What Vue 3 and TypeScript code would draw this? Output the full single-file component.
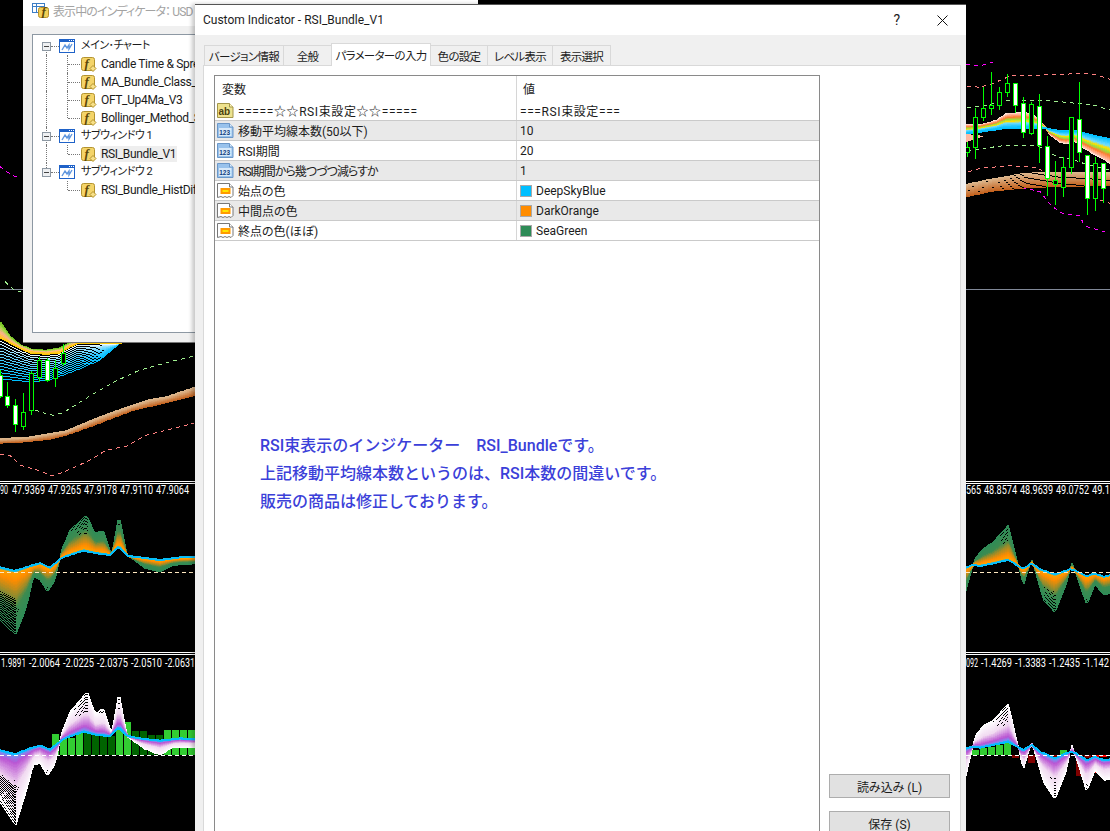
<script setup lang="ts">
type Pt = [number, number]
type Stop = [number, string]

interface Stroke {
  id: string
  points: string
  color: string
  width: number
}

// traced from the reference at 3x, so convert back to page pixels
const trace = (pts: number[][], ox: number, oy: number): Pt[] =>
  pts.map(([x, y]) => [ox + x / 3, oy + y / 3] as Pt)

const toPoints = (pts: Pt[]) => pts.map(([x, y]) => `${x},${y}`).join(' ')

const yAt = (pts: Pt[], x: number) => {
  for (let i = 1; i < pts.length; i++) {
    if (x <= pts[i][0]) {
      const [x0, y0] = pts[i - 1]
      const [x1, y1] = pts[i]
      return y0 + ((y1 - y0) * (x - x0)) / (x1 - x0 || 1)
    }
  }
  return pts[pts.length - 1][1]
}

const rgb = (hex: string) => [1, 3, 5].map((i) => parseInt(hex.slice(i, i + 2), 16))

const colorAt = (stops: Stop[], t: number) => {
  let i = 1
  while (i < stops.length - 1 && t > stops[i][0]) i++
  const [t0, c0] = stops[i - 1]
  const [t1, c1] = stops[i]
  const k = Math.min(1, Math.max(0, (t - t0) / (t1 - t0)))
  const a = rgb(c0)
  const b = rgb(c1)
  return `rgb(${a.map((v, n) => Math.round(v + (b[n] - v) * k)).join(',')})`
}

// a bundle of lines spread between two traced curves
const fan = (id: string, a: Pt[], b: Pt[], count: number, pow: number, stops: Stop[], thick = 0.45): Stroke[] => {
  const x0 = a[0][0]
  const x1 = a[a.length - 1][0]
  const out: Stroke[] = []
  for (let i = count; i >= 0; i--) {
    const t = Math.pow(i / count, pow)
    const pts: Pt[] = []
    for (let x = x0; x <= x1 + 2; x += 2) {
      pts.push([x, Math.round(yAt(a, x) + (yAt(b, x) - yAt(a, x)) * t)])
    }
    out.push({ id: `${id}${i}`, points: toPoints(pts), color: colorAt(stops, t), width: t < thick && i > 0 ? 2 : 1 })
  }
  return out
}

const rsiStops: Stop[] = [[0, '#00bfff'], [0.025, '#ffa000'], [0.15, '#ff8c00'], [0.6, '#3c8b50'], [1, '#2e8b57']]
const histStops: Stop[] = [[0, '#00bfff'], [0.025, '#7b8cf0'], [0.12, '#ba55d3'], [0.45, '#f0d8f0'], [1, '#ffffff']]
const copper: Stop[] = [[0, '#dcb68c'], [1, '#c4621e']]

const leftRsiA = trace([[0, 262], [45, 272], [90, 258], [120, 250], [150, 262], [180, 238], [195, 230], [250, 212], [290, 220], [330, 225], [357, 200], [382, 228], [420, 232], [480, 240], [540, 232], [583, 232]], 0, 480)
const leftRsiB = trace([[0, 420], [47, 465], [80, 380], [100, 290], [120, 300], [142, 335], [165, 300], [185, 210], [210, 150], [260, 105], [285, 160], [310, 150], [335, 225], [357, 105], [382, 225], [430, 262], [480, 275], [520, 255], [583, 250]], 0, 480)
const leftHistA = trace([[0, 300], [45, 312], [90, 295], [120, 287], [150, 298], [180, 275], [195, 265], [250, 245], [290, 255], [330, 258], [357, 233], [382, 258], [420, 265], [480, 272], [540, 265], [583, 268]], 0, 650)
const leftHistB = trace([[0, 455], [47, 528], [80, 420], [100, 345], [120, 340], [142, 378], [165, 345], [185, 250], [210, 185], [262, 124], [285, 190], [310, 175], [335, 250], [357, 124], [382, 260], [430, 295], [480, 315], [520, 292], [583, 290]], 0, 650)
const rightRsiA = trace([[18, 262], [40, 255], [60, 258], [100, 250], [145, 240], [175, 258], [190, 265], [215, 250], [240, 268], [285, 283], [330, 268], [348, 272], [380, 288], [405, 280], [430, 290], [450, 285]], 960, 480)
const rightRsiB = trace([[18, 332], [45, 235], [70, 205], [100, 185], [145, 135], [175, 255], [190, 318], [215, 238], [250, 360], [285, 398], [320, 310], [335, 245], [380, 375], [405, 312], [430, 345], [450, 340]], 960, 480)
const rightHistA = trace([[18, 805], [40, 800], [60, 803], [100, 795], [145, 785], [175, 803], [190, 810], [215, 795], [240, 815], [285, 835], [330, 815], [348, 820], [380, 840], [405, 830], [430, 840], [450, 838]], 960, 480)
const rightHistB = trace([[18, 888], [45, 770], [70, 735], [100, 720], [145, 670], [175, 800], [190, 872], [215, 785], [250, 905], [285, 960], [320, 870], [335, 792], [380, 935], [405, 870], [430, 900], [450, 897]], 960, 480)

const ribbonA = trace([[18, 222], [100, 210], [130, 205], [180, 204], [230, 204], [260, 205], [300, 212], [350, 212], [400, 225], [450, 235]], 960, 60)
const ribbonB = trace([[18, 195], [60, 195], [90, 188], [110, 182], [140, 162], [170, 160], [200, 160], [225, 170], [240, 185], [258, 205], [270, 222], [300, 245], [320, 250], [340, 240], [370, 262], [400, 280], [450, 308]], 960, 60)
const ribbonStops: Stop[] = [[0, '#00bfff'], [0.3, '#6fdcff'], [0.42, '#ffe000'], [0.55, '#9be03c'], [0.7, '#ff7a30'], [0.9, '#ffb8a0'], [1, '#ffe6dc']]

const leftLine = trace([[0, 175], [30, 190], [60, 205], [90, 218], [140, 222], [180, 218], [210, 200], [235, 190], [360, 190]], 0, 280)
const leftBlue = trace([[0, 295], [100, 305], [160, 295], [230, 270], [300, 240], [360, 190]], 0, 280)
const leftGreen = trace([[0, 125], [30, 170], [60, 195], [100, 210], [140, 212], [180, 205], [210, 190], [235, 185], [360, 190]], 0, 280)

const leftCopperA = trace([[0, 476], [80, 472], [150, 460], [200, 452], [300, 410], [350, 392], [400, 375], [450, 358], [500, 350], [583, 322]], 0, 280)
const leftCopperB = trace([[0, 488], [80, 484], [150, 476], [200, 464], [300, 428], [350, 408], [400, 390], [450, 378], [500, 366], [583, 346]], 0, 280)
const rightCopperA = trace([[18, 372], [100, 355], [200, 338], [300, 335], [450, 335]], 960, 60)
const rightCopperB = trace([[18, 410], [100, 392], [200, 382], [300, 378], [450, 375]], 960, 60)

const bundles: Stroke[] = [
  ...fan('a', leftLine, leftGreen, 10, 1, [[0, '#ffd000'], [0.35, '#ffb090'], [0.7, '#a8d848'], [1, '#6cc020']], 2),
  ...fan('b', leftLine, leftBlue, 13, 1, [[0, '#ffc800'], [0.04, '#ffffff'], [0.2, '#a0e4ff'], [0.6, '#30c8ff'], [1, '#00bfff']], 0.06),
  ...fan('c', leftCopperA, leftCopperB, 10, 1, copper, 2),
  ...fan('d', rightCopperA, rightCopperB, 12, 1, copper, 0),
  ...fan('e', ribbonA, ribbonB, 26, 1, ribbonStops, 2),
  ...fan('f', leftRsiA, leftRsiB, 40, 1.8, rsiStops),
  ...fan('g', rightRsiA, rightRsiB, 40, 1.8, rsiStops),
]

const histBundles: Stroke[] = [
  ...fan('h', leftHistA, leftHistB, 40, 1.8, histStops),
  ...fan('i', rightHistA, rightHistB, 40, 1.8, histStops),
]

const dashLines = [
  { color: '#ff00ff', pts: trace([[0, 500], [20, 515], [45, 530], [60, 532]], 0, 0) },
  { color: '#a0f090', pts: trace([[15, 5], [40, 28], [70, 38]], 0, 280) },
  { color: '#a0f090', pts: trace([[105, 390], [135, 400], [160, 406], [190, 398], [250, 360], [300, 330], [350, 302], [420, 270], [500, 248], [583, 228]], 0, 280) },
  { color: '#ff8080', pts: trace([[0, 524], [30, 526], [60, 555], [110, 570], [160, 588], [210, 568], [270, 540], [320, 510], [380, 498], [440, 465], [500, 450], [583, 430]], 0, 280) },
  { color: '#ff00ff', pts: trace([[18, 13], [60, 18], [110, 3]], 960, 60) },
  { color: '#ff8080', pts: trace([[20, 78], [60, 82], [100, 70], [150, 48], [250, 45], [380, 40], [410, 45], [450, 58]], 960, 60) },
  { color: '#a0f090', pts: trace([[20, 142], [60, 140], [140, 120], [250, 120], [300, 125], [400, 135], [450, 150]], 960, 60) },
  { color: '#a0f090', pts: trace([[20, 272], [130, 257], [230, 255], [290, 290], [330, 295], [370, 310], [450, 330]], 960, 60) },
  { color: '#ff8080', pts: trace([[25, 335], [60, 325], [150, 317], [230, 322], [250, 335]], 960, 60) },
  { color: '#ff8080', pts: trace([[420, 420], [450, 430]], 960, 60) },
  { color: '#ff00ff', pts: trace([[20, 405], [100, 385], [200, 385], [240, 395], [270, 432], [300, 458], [360, 468], [370, 490], [385, 502], [445, 518]], 960, 60) },
].map((line, i) => ({ id: i, color: line.color, points: toPoints(line.pts) }))

// x, body top, body bottom, wick top, wick bottom, filled
const candles: [number, number, number, number, number, boolean][] = [
  [0, 375, 396, 370, 398, true],
  [7, 396, 405, 382, 408, true],
  [15, 405, 424, 399, 432, true],
  [23, 412, 426, 393, 430, false],
  [31, 373, 410, 371, 415, false],
  [39, 360, 377, 357, 382, false],
  [47, 360, 380, 358, 382, true],
  [55, 368, 378, 360, 387, false],
  [63, 353, 363, 344, 366, false],
  [967, 147, 152, 142, 157, false],
  [975, 117, 147, 108, 159, false],
  [983, 108, 117, 87, 121, false],
  [991, 105, 108, 72, 115, false],
  [999, 92, 105, 87, 110, false],
  [1007, 83, 92, 74, 97, false],
  [1015, 83, 105, 83, 113, true],
  [1023, 103, 132, 97, 138, true],
  [1031, 104, 133, 102, 135, false],
  [1039, 106, 145, 94, 163, true],
  [1047, 146, 178, 136, 196, true],
  [1055, 180, 184, 161, 205, false],
  [1063, 167, 187, 157, 197, false],
  [1071, 117, 167, 117, 174, false],
  [1079, 119, 152, 82, 162, true],
  [1087, 155, 198, 155, 215, true],
  [1095, 163, 198, 157, 211, false],
  [1103, 163, 188, 163, 203, true],
]

const lime = '#32cd32'
const dark = '#006400'
const maroon = '#800000'
const red = '#ff0000'

const histBars = [
  ...[734, 738, 738, 733, 731, 734, 733, 736, 727, 722, 731, 731, 735, 735, 730, 730, 730, 730].map((top, i) => ({
    x: 52 + 8 * i,
    y: top,
    h: 755 - top,
    color: [4, 5, 6, 7, 10, 11, 12, 13].includes(i) ? dark : lime,
  })),
  { x: 966, y: 748, h: 7, color: lime },
  { x: 972, y: 750, h: 5, color: lime },
  { x: 980, y: 748, h: 7, color: lime },
  { x: 988, y: 747, h: 8, color: lime },
  { x: 996, y: 745, h: 10, color: lime },
  { x: 1004, y: 743, h: 12, color: lime },
  { x: 1012, y: 755, h: 3, color: maroon },
  { x: 1028, y: 755, h: 8, color: maroon },
  { x: 1052, y: 755, h: 2, color: maroon },
  { x: 1060, y: 750, h: 5, color: lime },
  { x: 1076, y: 755, h: 21, color: maroon },
  { x: 1084, y: 755, h: 3, color: maroon },
  { x: 1092, y: 755, h: 18, color: red },
  { x: 1100, y: 755, h: 2, color: red },
]

const valueLabels = [
  { y: 494, w: 8, x: 0, t: '90' },
  { y: 494, w: 33, x: 12, t: '47.9369' },
  { y: 494, w: 33, x: 48, t: '47.9265' },
  { y: 494, w: 33, x: 84, t: '47.9178' },
  { y: 494, w: 33, x: 120, t: '47.9110' },
  { y: 494, w: 33, x: 156, t: '47.9064' },
  { y: 494, w: 15, x: 966, t: '565' },
  { y: 494, w: 33, x: 984, t: '48.8574' },
  { y: 494, w: 33, x: 1020, t: '48.9639' },
  { y: 494, w: 33, x: 1056, t: '49.0752' },
  { y: 494, w: 18, x: 1092, t: '49.1' },
  { y: 667, w: 25, x: 1, t: '1.9891' },
  { y: 667, w: 31, x: 29, t: '-2.0064' },
  { y: 667, w: 31, x: 63, t: '-2.0225' },
  { y: 667, w: 31, x: 97, t: '-2.0375' },
  { y: 667, w: 31, x: 131, t: '-2.0510' },
  { y: 667, w: 30, x: 165, t: '-2.0631' },
  { y: 667, w: 12, x: 966, t: '092' },
  { y: 667, w: 31, x: 981, t: '-1.4269' },
  { y: 667, w: 31, x: 1015, t: '-1.3383' },
  { y: 667, w: 31, x: 1049, t: '-1.2435' },
  { y: 667, w: 26, x: 1083, t: '-1.142' },
]

const treeRows = [
  { label: 'メイン･チャート', top: true, trunk: 'lower' },
  { label: 'Candle Time & Spre', trunk: 'full', branch: 'full' },
  { label: 'MA_Bundle_Class_V', trunk: 'full', branch: 'full' },
  { label: 'OFT_Up4Ma_V3', trunk: 'full', branch: 'full' },
  { label: 'Bollinger_Method_S', trunk: 'full', branch: 'upper' },
  { label: 'サブウィンドウ 1', top: true, trunk: 'full' },
  { label: 'RSI_Bundle_V1', trunk: 'full', branch: 'upper', selected: true },
  { label: 'サブウィンドウ 2', top: true, trunk: 'upper' },
  { label: 'RSI_Bundle_HistDif', branch: 'upper' },
]

const tabs = ['バージョン情報', '全般', 'パラメーターの入力', '色の設定', 'レベル表示', '表示選択']

const params = [
  { kind: 'ab', name: '=====☆☆RSI束設定☆☆=====', value: '===RSI束設定===', spacing: 'wide' },
  { kind: 'num', name: '移動平均線本数(50以下)', value: '10' },
  { kind: 'num', name: 'RSI期間', value: '20' },
  { kind: 'num', name: 'RSI期間から幾つづつ減らすか', value: '1', spacing: 'tight' },
  { kind: 'color', name: '始点の色', value: 'DeepSkyBlue', swatch: '#00bfff' },
  { kind: 'color', name: '中間点の色', value: 'DarkOrange', swatch: '#ff8c00' },
  { kind: 'color', name: '終点の色(ほぼ)', value: 'SeaGreen', swatch: '#2e8b57' },
]
</script>

<template>
  <main class="desk">
    <svg class="chart" width="1110" height="831" viewBox="0 0 1110 831">
      <rect x="0" y="289" width="1110" height="1" fill="#808898" />
      <polyline
        v-for="line in dashLines"
        :key="line.id"
        :points="line.points"
        :stroke="line.color"
        fill="none"
        stroke-dasharray="4 4"
      />
      <polyline
        v-for="line in bundles"
        :key="line.id"
        :points="line.points"
        :stroke="line.color"
        :stroke-width="line.width"
        fill="none"
      />
      <polygon points="966,134 966,142 985,136" fill="#ffb8a0" />
      <g v-for="c in candles" :key="c[0]">
        <line :x1="c[0] + 0.5" :x2="c[0] + 0.5" :y1="c[3]" :y2="c[4]" stroke="#00ff00" />
        <rect
          :x="c[0] - 2 + 0.5"
          :y="c[1] + 0.5"
          width="4"
          :height="c[2] - c[1]"
          :fill="c[5] ? '#ffffff' : '#000000'"
          stroke="#00ff00"
        />
      </g>
      <rect x="0" y="481" width="1110" height="1" fill="#ffffff" />
      <rect x="0" y="483" width="1110" height="1" fill="#ffffff" />
      <rect x="0" y="652" width="1110" height="1" fill="#ffffff" />
      <rect x="0" y="654" width="1110" height="1" fill="#ffffff" />
      <line x1="0" x2="1110" y1="572.5" y2="572.5" stroke="#ffe8c0" stroke-dasharray="4 3" />
      <rect v-for="bar in histBars" :key="bar.x" :x="bar.x" :y="bar.y" width="7" :height="bar.h" :fill="bar.color" />
      <polyline
        v-for="line in histBundles"
        :key="line.id"
        :points="line.points"
        :stroke="line.color"
        :stroke-width="line.width"
        fill="none"
      />
      <line x1="0" x2="1110" y1="755.5" y2="755.5" stroke="#ffffff" stroke-dasharray="4 3" />
      <text
        v-for="label in valueLabels"
        :key="label.t + label.x"
        class="value-label"
        :x="label.x"
        :y="label.y"
        :textLength="label.w"
        lengthAdjust="spacingAndGlyphs"
      >{{ label.t }}</text>
    </svg>

    <section class="list-window">
      <header class="list-title">
        <svg class="list-icon" width="17" height="16" viewBox="0 0 17 16">
          <rect x="0.5" y="1.5" width="12" height="9" fill="#fff" stroke="#3b7dc4" />
          <path d="M0 4.5h13M4.5 2v8" stroke="#3b7dc4" />
          <rect x="6.5" y="5.5" width="10" height="10" rx="2" fill="#f2cf55" stroke="#b8902a" />
          <text x="9.5" y="14" class="f-mark">f</text>
        </svg>
        <span>表示中のインディケータ： USD</span>
      </header>
      <div class="tree">
        <div
          v-for="row in treeRows"
          :key="row.label"
          class="tree-row"
          :class="{ 'is-top': row.top }"
        >
          <i v-if="row.trunk" class="trunk" :class="row.trunk"></i>
          <template v-if="row.top">
            <span class="expander"><b></b></span>
            <svg class="window-icon" width="16" height="14" viewBox="0 0 16 14">
              <rect x="0.5" y="0.5" width="15" height="13" fill="#fff" stroke="#1f62c8" />
              <rect x="0" y="0" width="16" height="3" fill="#1f62c8" />
              <path d="M10 1.5h1M12 1.5h1M14 1.5h1" stroke="#fff" />
              <path d="M3 11 L6 6 L8 9 L10 6 L10 10 L13 5" fill="none" stroke="#5f96de" stroke-width="1.4" />
            </svg>
          </template>
          <template v-else>
            <i class="branch" :class="row.branch"></i>
            <svg class="func-icon" width="16" height="15" viewBox="0 0 16 15">
              <rect x="0.5" y="0.5" width="13" height="13" rx="2" fill="#f4d469" stroke="#b3932f" />
              <text x="3.5" y="11" class="f-mark">f</text>
              <path d="M12 8.5l3 3-3 3-3-3z" fill="#f8e088" stroke="#b3932f" />
            </svg>
          </template>
          <span class="tree-label" :class="{ selected: row.selected }">{{ row.label }}</span>
        </div>
      </div>
    </section>

    <section class="dialog">
      <header class="dialog-title">
        <span>Custom Indicator - RSI_Bundle_V1</span>
        <span class="help">?</span>
        <svg class="close" width="11" height="11" viewBox="0 0 11 11">
          <path d="M0.5 0.5L10.5 10.5M10.5 0.5L0.5 10.5" stroke="#111" />
        </svg>
      </header>

      <nav class="tabs">
        <span v-for="(tab, i) in tabs" :key="tab" class="tab" :class="{ active: i === 2 }">{{ tab }}</span>
      </nav>

      <div class="pane">
        <div class="param-table">
          <div class="param-head">
            <span class="col-name">変数</span>
            <span class="col-value">値</span>
          </div>
          <div v-for="(p, i) in params" :key="p.name" class="param-row" :class="{ shaded: i % 2 === 1 }">
            <div class="col-name">
              <svg width="17" height="17" viewBox="0 0 17 17" class="param-icon">
                <template v-if="p.kind === 'ab'">
                  <path d="M0.5 1.500h12l3.500 3.500v10.500h-15.500z" fill="#eee28e" stroke="#a3964a" />
                  <path d="M12.500 1.500v3.500h3.500" fill="#fff6c0" stroke="#a3964a" />
                  <text x="1.500" y="12.500" class="ab-mark">ab</text>
                </template>
                <template v-else-if="p.kind === 'num'">
                  <path d="M0.500 1.500h12l3.500 3.500v10.500h-15.500z" fill="#98c2ec" stroke="#6b97c8" />
                  <path d="M12.500 1.500v3.500h3.500" fill="#dcecfb" stroke="#6b97c8" />
                  <rect x="2" y="6" width="12.500" height="8" fill="#d8e9f9" />
                  <text x="2.200" y="12.700" class="num-mark">123</text>
                </template>
                <template v-else>
                  <path d="M0.500 1.500h12l3.500 3.500v8.500l-2 2-2-1-2 1-2-1-2 1-2-1-3.500 1z" fill="#fff" stroke="#777" />
                  <path d="M12.500 1.500v3.500h3.500" fill="#fff" stroke="#777" />
                  <rect x="3.500" y="6" width="10" height="6" fill="#ff9a00" />
                  <rect x="5.500" y="8" width="6" height="2" fill="#ffe600" />
                </template>
              </svg>
              <span :class="p.spacing">{{ p.name }}</span>
            </div>
            <div class="col-value">
              <i v-if="p.swatch" class="swatch" :style="{ background: p.swatch }"></i>
              <span :class="p.spacing">{{ p.value }}</span>
            </div>
          </div>
        </div>

        <div class="side">
          <button type="button" class="side-btn">読み込み (L)</button>
          <button type="button" class="side-btn">保存 (S)</button>
        </div>
      </div>

      <div class="note">
        <p>RSI束表示のインジケーター　RSI_Bundleです。</p>
        <p>上記移動平均線本数というのは、RSI本数の間違いです。</p>
        <p>販売の商品は修正しております。</p>
      </div>
    </section>
  </main>
</template>

<style>
html, body { margin: 0; background: #000; overflow: hidden; }
</style>

<style scoped>
.desk {
  position: relative;
  width: 1110px;
  height: 831px;
  overflow: hidden;
  background: #000;
  font-family: Roboto, "Noto Sans CJK JP", sans-serif;
  font-size: 12px;
  color: #1c1c1c;
  font-feature-settings: "palt";
}

.chart { position: absolute; left: 0; top: 0; shape-rendering: crispEdges; }
.value-label { fill: #fff; font-family: Roboto, sans-serif; font-size: 12px; }

/* 後ろのウィンドウ */
.list-window {
  position: absolute;
  left: 23px;
  top: -4px;
  width: 455px;
  height: 347px;
  box-sizing: border-box;
  background: #f0f0f0;
  border-bottom: 1px solid #777;
  display: flex;
  flex-direction: column;
}

.list-title {
  height: 30px;
  flex: none;
  background: #fff;
  color: #a3a3a3;
  display: flex;
  align-items: center;
  gap: 4px;
  padding: 0 0 2px 9px;
  box-sizing: border-box;
  letter-spacing: -0.9px;
}

.list-icon { flex: none; }

.tree {
  margin: 8px 0 0 9px;
  height: 299px;
  box-sizing: border-box;
  background: #fff;
  border: 1px solid #8d98a3;
  padding-top: 2px;
}

.tree-row {
  position: relative;
  height: 18px;
  display: flex;
  align-items: center;
  padding-left: 48px;
  white-space: nowrap;
  overflow: hidden;
}

.tree-row.is-top { padding-left: 9px; }
.is-top .tree-label { font-size: 11px; letter-spacing: -0.5px; }

.func-icon { flex: none; margin-right: 3px; }
.window-icon { flex: none; margin: 0 5px 0 8px; }
.tree-label { padding: 0 1px; line-height: 16px; letter-spacing: -0.35px; }
.tree-label.selected { background: #eeeeee; }

.expander {
  position: relative;
  flex: none;
  width: 9px;
  height: 9px;
  box-sizing: border-box;
  background: #eef0f2;
  border: 1px solid #8d98a3;
  z-index: 1;
}

.expander b {
  position: absolute;
  left: 1px;
  top: 3px;
  width: 5px;
  height: 1px;
  background: #444;
}

.is-top .expander::after {
  content: "";
  position: absolute;
  left: 8px;
  top: 3px;
  width: 8px;
  border-top: 1px dotted #777;
}

.trunk, .branch { position: absolute; border-left: 1px dotted #777; }
.trunk { left: 13px; }
.trunk.full { top: 0; height: 18px; }
.trunk.lower { top: 9px; height: 9px; }
.trunk.upper { top: 0; height: 9px; }
.branch { left: 34px; top: 0; }
.branch.full { height: 18px; }
.branch.upper { height: 9px; }
.branch::after {
  content: "";
  position: absolute;
  left: 0;
  top: 9px;
  width: 12px;
  border-top: 1px dotted #777;
}

/* メインのダイアログ */
.dialog {
  position: absolute;
  left: 195px;
  top: 4px;
  width: 771px;
  height: 840px;
  box-sizing: border-box;
  background: #f0f0f0;
  border-top: 1px solid #555;
  box-shadow: -3px 0 4px rgba(0, 0, 0, 0.22);
}

.dialog-title {
  height: 30px;
  background: #fff;
  display: flex;
  align-items: center;
  padding: 0 18px 0 8px;
}

.help { margin-left: auto; margin-right: 37px; font-size: 14px; }

.tabs {
  position: relative;
  z-index: 1;
  display: grid;
  grid-template-columns: 79px 48px 99px 57px 65px 58px;
  align-items: end;
  height: 23px;
  margin: 8px 0 -1px 9px;
}

.tab {
  height: 21px;
  box-sizing: border-box;
  border: 1px solid #d9d9d9;
  border-bottom: 0;
  margin-right: -1px;
  display: flex;
  align-items: center;
  justify-content: center;
  white-space: nowrap;
  font-size: 11.5px;
  letter-spacing: -0.7px;
}

.tab.active {
  height: 23px;
  background: #fff;
  position: relative;
  z-index: 1;
}

.pane {
  height: 780px;
  box-sizing: border-box;
  margin: 0 5px 0 8px;
  padding: 9px 10px;
  background: #fff;
  border: 1px solid #d9d9d9;
  display: flex;
  gap: 9px;
}

.param-table {
  width: 606px;
  flex: none;
  box-sizing: border-box;
  border: 1px solid #8a8a8a;
}

.param-head {
  height: 25px;
  display: flex;
  align-items: center;
}

.param-row {
  height: 20px;
  box-sizing: border-box;
  border-bottom: 1px solid #cacaca;
  display: flex;
  align-items: center;
}

.param-row.shaded { background: #e9e9e9; }

.col-name {
  width: 302px;
  height: 100%;
  flex: none;
  box-sizing: border-box;
  border-right: 1px solid #d6d6d6;
  display: flex;
  align-items: center;
  white-space: nowrap;
}

.param-head .col-name { padding-left: 7px; }
.param-head .col-value { padding-left: 6px; }
.param-row .col-name { padding-left: 2px; gap: 4px; }
.col-value {
  flex: 1;
  display: flex;
  align-items: center;
  gap: 4px;
  padding-left: 3px;
  white-space: nowrap;
}

.wide { letter-spacing: 0.6px; }
.tight { letter-spacing: -1px; }

.param-icon { flex: none; }

.ab-mark { font: 700 10px "Liberation Sans", sans-serif; fill: #4a4210; }
.num-mark { font: 700 6.500px "Liberation Sans", sans-serif; fill: #123f80; }
.f-mark { font: italic 700 13px "Liberation Serif", serif; fill: #5c4708; }

.swatch {
  width: 12px;
  height: 12px;
  box-sizing: border-box;
  border: 1px solid #a8a8a8;
}

.side {
  flex: 1;
  padding-top: 699px;
  display: flex;
  flex-direction: column;
  gap: 13px;
}

.side-btn {
  height: 24px;
  flex: none;
  background: #e1e1e1;
  border: 1px solid #adadad;
  font: inherit;
  color: inherit;
  padding: 0;
  width: 121px;
}

.note {
  position: absolute;
  left: 65px;
  top: 427px;
  color: #3b3fd9;
  font-size: 16px;
  font-weight: 500;
  font-feature-settings: normal;
  line-height: 28px;
  white-space: nowrap;
}

.note p { margin: 0; }
</style>
